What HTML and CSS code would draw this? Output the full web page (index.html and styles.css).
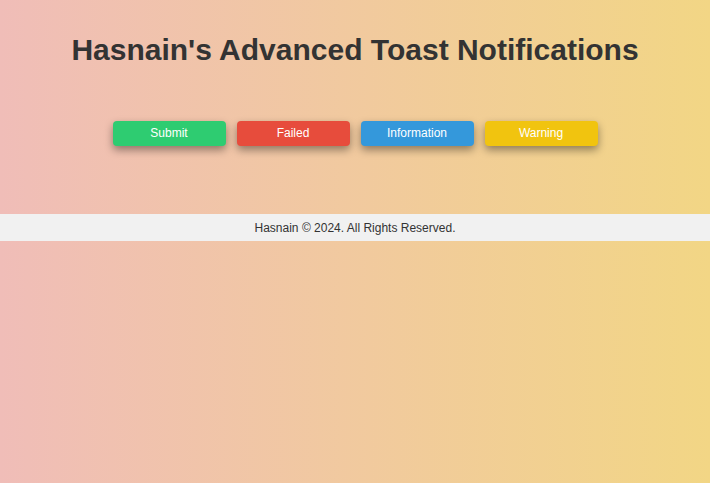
FILE: index.html
```html
<!DOCTYPE html>
<html>
<head>
<meta charset="utf-8">
<link rel="stylesheet" href="styles.css">
</head>
<body>
<div class="main">
  <h1 class="title">Hasnain's Advanced Toast Notifications</h1>
  <div class="buttons">
    <button class="btn btn-success">Submit</button>
    <button class="btn btn-error">Failed</button>
    <button class="btn btn-info">Information</button>
    <button class="btn btn-warning">Warning</button>
  </div>
</div>
<footer class="footer">Hasnain © 2024. All Rights Reserved.</footer>
</body>
</html>
```
FILE: styles.css
```css
html, body {
  margin: 0;
  height: 100%;
}
body {
  font-family: "Liberation Sans", Arial, sans-serif;
  background: linear-gradient(to right, #f0bdb8, #f2d685);
  color: #333;
}
.main {
  display: flex;
  flex-direction: column;
  align-items: center;
  padding-top: 32px;
  height: 182px;
  box-sizing: border-box;
}
.title {
  margin: 0;
  font-size: 30px;
  font-weight: bold;
  color: #333;
  line-height: 36px;
}
.buttons {
  display: flex;
  gap: 11px;
  margin-top: 53px;
}
.btn {
  width: 113px;
  height: 25px;
  border: none;
  border-radius: 4px;
  color: #fff;
  font-family: "Liberation Sans", Arial, sans-serif;
  font-size: 12px;
  box-shadow: 0 4px 8px rgba(0,0,0,0.4);
  padding: 0 0 2px;
}
.btn-success { background: #2ecc71; }
.btn-error { background: #e74c3c; }
.btn-info { background: #3498db; }
.btn-warning { background: #f1c40f; }
.footer {
  margin-top: 32px;
  background: #f1f1f1;
  height: 27px;
  box-sizing: border-box;
  padding-top: 1px;
  line-height: 27px;
  text-align: center;
  font-size: 12px;
  color: #333;
}
```
